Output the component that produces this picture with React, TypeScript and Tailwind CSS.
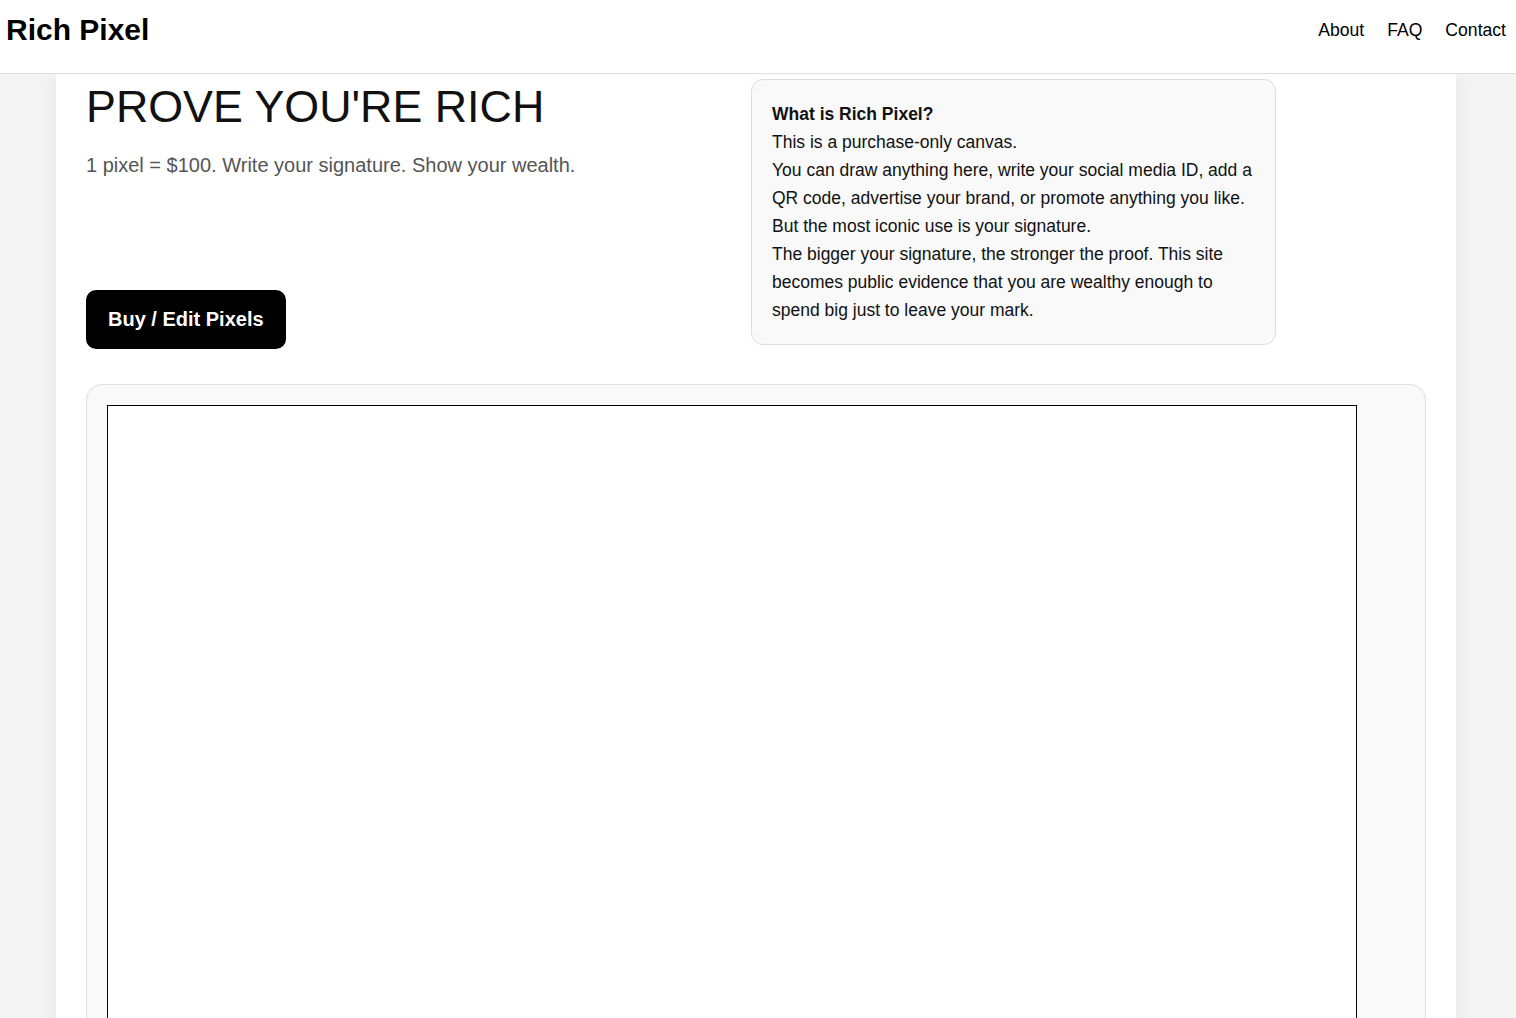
export default function App() {
	return (
		<div
			className="min-h-screen bg-[#f4f4f4] text-[#111]"
			style={{ fontFamily: '"Liberation Sans", Arial, sans-serif' }}
		>
			<header className="relative z-10 flex h-[74px] items-center justify-between border-b border-[#dddddd] bg-white pb-[13px] pl-[6px] pr-[10px]">
				<h1 className="text-[30px] font-bold leading-none text-black">Rich Pixel</h1>
				<nav className="flex gap-[23px] text-[17.6px] text-black">
					<a href="#about">About</a>
					<a href="#faq">FAQ</a>
					<a href="#contact">Contact</a>
				</nav>
			</header>

			<main className="ml-[56px] w-[1400px] bg-white px-[30px] pt-[5px] pb-10 shadow-[0_0_18px_rgba(0,0,0,0.07)]">
				<section className="flex items-start">
					<div className="flex w-[665px] flex-col pt-[2px]">
						<h2 className="text-[44.8px] font-normal leading-[1.15] text-[#111]">
							PROVE YOU'RE RICH
						</h2>
						<p className="mt-[17px] text-[20px] text-[#555]">
							1 pixel = $100. Write your signature. Show your wealth.
						</p>
						<button className="mt-[110px] w-fit rounded-[10px] bg-black px-[22px] py-[18px] text-[20px] font-bold leading-[23px] text-white">
							Buy / Edit Pixels
						</button>
					</div>

					<aside className="w-[525px] rounded-[12px] border border-[#dddddd] bg-[#f9f9f9] px-5 pt-[20px] pb-[20px] text-[17.5px] leading-[28px] text-[#111]">
						<strong className="block">What is Rich Pixel?</strong>
						<p>This is a purchase-only canvas.</p>
						<p>
							You can draw anything here, write your social media ID, add a QR code,
							advertise your brand, or promote anything you like.
						</p>
						<p>But the most iconic use is your signature.</p>
						<p>
							The bigger your signature, the stronger the proof. This site becomes
							public evidence that you are wealthy enough to spend big just to leave
							your mark.
						</p>
					</aside>
				</section>

				<section className="mt-[35px] rounded-[16px] border border-[#e0e0e0] bg-[#f9f9f9] p-5">
					<div className="h-[1000px] w-[1250px] border border-black bg-white" />
				</section>
			</main>
		</div>
	);
}
